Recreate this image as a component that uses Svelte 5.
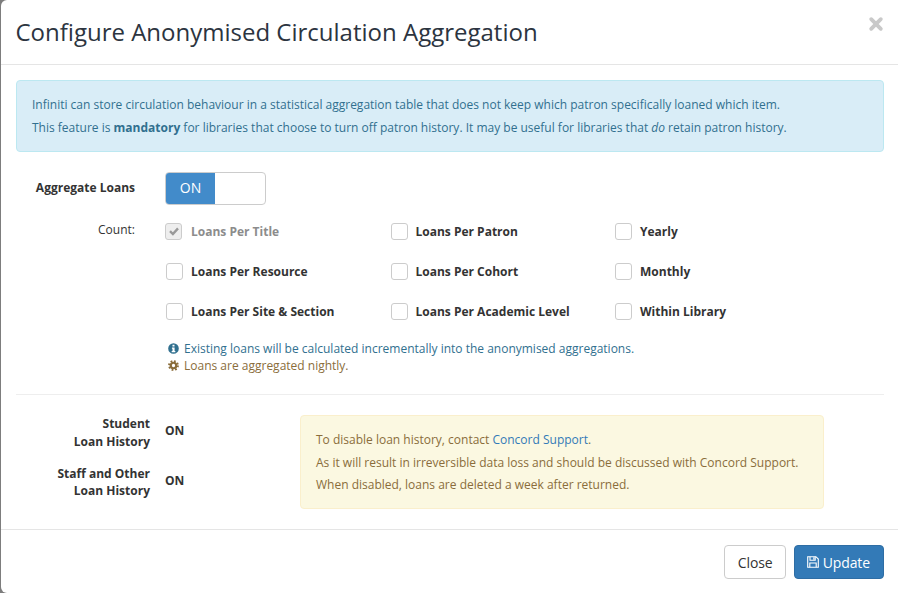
<script>
  const columns = [
    [
      { label: 'Loans Per Title', checked: true, disabled: true },
      { label: 'Loans Per Resource' },
      { label: 'Loans Per Site & Section' }
    ],
    [
      { label: 'Loans Per Patron' },
      { label: 'Loans Per Cohort' },
      { label: 'Loans Per Academic Level' }
    ],
    [{ label: 'Yearly' }, { label: 'Monthly' }, { label: 'Within Library' }]
  ];
</script>

<div class="modal">
  <header class="modal-header">
    <h4>Configure Anonymised Circulation Aggregation</h4>
    <button class="close" aria-label="Close">
      <svg viewBox="0 0 16 16" width="16" height="16">
        <path d="M3.2 3.2 12.8 12.8M12.8 3.2 3.2 12.8" />
      </svg>
    </button>
  </header>

  <div class="modal-body">
    <div class="alert info">
      <p>Infiniti can store circulation behaviour in a statistical aggregation table that does not keep which patron specifically loaned which item.</p>
      <p>This feature is <b>mandatory</b> for libraries that choose to turn off patron history. It may be useful for libraries that <i>do</i> retain patron history.</p>
    </div>

    <div class="toggle-row">
      <span class="row-label strong">Aggregate Loans</span>
      <div class="toggle">
        <span class="toggle-on">ON</span>
      </div>
    </div>

    <div class="count-row">
      <span class="row-label">Count:</span>
      <div class="count-grid">
        {#each columns as col}
          <div class="count-col">
            {#each col as item}
              <div class="check" class:disabled={item.disabled}>
                <span class="box">
                  {#if item.checked}
                    <svg viewBox="0 0 12 12" width="12" height="12">
                      <path d="M2 6.2 4.9 9 10 3.4" />
                    </svg>
                  {/if}
                </span>
                <span>{item.label}</span>
              </div>
            {/each}
          </div>
        {/each}
      </div>
    </div>

    <div class="notes">
      <div class="note blue">
        <svg viewBox="0 0 12 12" width="11" height="11">
          <path fill-rule="evenodd" d="M6 .2a5.800 5.800 0 1 0 0 11.600A5.800 5.800 0 0 0 6 .2ZM4.900 1.900h2.200v1.800H4.900ZM4.300 4.800h2.900v3.900h.8V10.200H4V8.700h.9V6.300h-.6Z" />
        </svg>
        Existing loans will be calculated incrementally into the anonymised aggregations.
      </div>
      <div class="note brown">
        <svg class="cog" viewBox="0 0 12 12" width="11" height="11">
          <circle cx="6" cy="6" r="3" />
          <circle class="teeth" cx="6" cy="6" r="4.900" />
        </svg>
        Loans are aggregated nightly.
      </div>
    </div>

    <hr />

    <div class="history">
      <div class="history-list">
        <div class="history-item">
          <span class="history-label">Student<br />Loan History</span>
          <span class="history-value">ON</span>
        </div>
        <div class="history-item">
          <span class="history-label">Staff and Other<br />Loan History</span>
          <span class="history-value">ON</span>
        </div>
      </div>
      <div class="alert warning">
        <p>To disable loan history, contact <a href="#support">Concord Support</a>.</p>
        <p>As it will result in irreversible data loss and should be discussed with Concord Support.</p>
        <p>When disabled, loans are deleted a week after returned.</p>
      </div>
    </div>
  </div>

  <footer class="modal-footer">
    <button class="btn">Close</button>
    <button class="btn primary">
      <svg viewBox="0 0 12 12" width="12" height="12">
        <path d="M.7.7h8.200l2.400 2.400v8.200H.7Z" />
        <path d="M3 .7v3.600h5.200V.7M2.800 11.300V7h6.400v4.300" />
        <path class="slot" d="M6.300 1.300h1.200v2.400H6.300Z" />
      </svg>
      Update
    </button>
  </footer>
</div>

<style>
  :global(body) {
    margin: 0;
    background: #7d7d7d;
    font-family: "Open Sans", "Liberation Sans", sans-serif;
    font-size: 12px;
    color: #333;
  }

  .modal {
    margin-left: 1px;
    height: 593px;
    box-sizing: border-box;
    background: #fff;
    border-radius: 6px 0 0 6px;
    display: flex;
    flex-direction: column;
    overflow: hidden;
  }

  .modal-header {
    height: 65px;
    box-sizing: border-box;
    flex: none;
    border-bottom: 1px solid #e5e5e5;
    padding: 15px 14px 0 15px;
    display: flex;
    justify-content: space-between;
    align-items: flex-start;
  }

  h4 {
    margin: 0 0 0 -0.5px;
    font-size: 24px;
    line-height: 34px;
    font-weight: 400;
    color: #2c3440;
  }

  .close {
    border: 0;
    background: none;
    padding: 0;
    margin: 1px 0 0 0;
    height: 16px;
    display: block;
  }

  .close path {
    fill: none;
    stroke: #c9c9c9;
    stroke-width: 3.800;
    stroke-linecap: round;
  }

  .modal-body {
    flex: 1;
    padding: 15px 14px 0 15px;
  }

  .alert {
    border: 1px solid;
    border-radius: 4px;
    box-sizing: border-box;
  }

  .alert p {
    margin: 0;
    line-height: 22.500px;
  }

  .info {
    background: #d9edf7;
    border-color: #bce8f1;
    color: #31708f;
    height: 72px;
    padding: 13px 15px;
  }

  .toggle-row {
    display: flex;
    margin-top: 20px;
    align-items: center;
    height: 33px;
  }

  .row-label {
    width: 119px;
    text-align: right;
    flex: none;
  }

  .strong {
    font-weight: 700;
    padding-bottom: 2px;
  }

  .toggle {
    margin-left: 30px;
    width: 101px;
    height: 33px;
    box-sizing: border-box;
    border: 1px solid #ccc;
    border-radius: 4px;
    overflow: hidden;
  }

  .toggle-on {
    display: block;
    width: 49px;
    height: 100%;
    background: #428bca;
    color: #fff;
    font-size: 14px;
    line-height: 29px;
    text-align: center;
  }

  .count-row {
    display: flex;
    margin-top: 15px;
  }

  .count-row .row-label {
    line-height: 20px;
  }

  .count-grid {
    display: flex;
    margin-left: 31px;
  }

  .count-col {
    width: 224.500px;
    display: flex;
    flex-direction: column;
    gap: 20px;
    margin-top: 1px;
  }

  .check {
    display: flex;
    align-items: center;
    gap: 8px;
    height: 20px;
    font-weight: 700;
  }

  .box {
    width: 17px;
    height: 17px;
    box-sizing: border-box;
    border: 1px solid #ccc;
    border-radius: 3px;
    background: #fff;
    display: flex;
    align-items: center;
    justify-content: center;
    flex: none;
  }

  .box path {
    fill: none;
    stroke: #999;
    stroke-width: 2.400;
  }

  .disabled {
    color: #8c8c8c;
  }

  .disabled .box {
    background: #eee;
    margin-left: -1px;
    margin-right: 1px;
  }

  .notes {
    margin: 19px 0 0 152px;
    line-height: 17px;
  }

  .note {
    display: flex;
    align-items: center;
    gap: 5px;
  }

  .note svg {
    flex: none;
  }

  .blue {
    color: #31708f;
  }

  .brown {
    color: #8a6d3b;
  }

  .note path {
    fill: currentColor;
  }

  .cog circle {
    fill: none;
    stroke: currentColor;
    stroke-width: 2.400;
  }

  .cog .teeth {
    stroke-width: 2;
    stroke-dasharray: 1.924 1.924;
  }

  hr {
    border: 0;
    border-top: 1px solid #eee;
    margin: 20px 0 20px;
  }

  .history {
    display: flex;
  }

  .history-list {
    width: 284px;
    flex: none;
    font-weight: 700;
  }

  .history-item {
    display: flex;
    align-items: center;
    margin-bottom: 14.750px;
  }

  .history-label {
    width: 134px;
    text-align: right;
    line-height: 17.500px;
  }

  .history-value {
    margin: 0 0 4px 15px;
  }

  .warning {
    width: 524px;
    height: 94px;
    background: #fbf8e1;
    border-color: #faefcc;
    color: #8a6d3b;
    padding: 13px 15px;
  }

  .warning a {
    color: #337ab7;
    text-decoration: none;
  }

  .modal-footer {
    height: 64px;
    flex: none;
    box-sizing: border-box;
    border-top: 1px solid #e5e5e5;
    padding: 15px 14px 0 0;
    display: flex;
    justify-content: flex-end;
    align-items: flex-start;
    gap: 8px;
  }

  .btn {
    font-family: inherit;
    font-size: 14px;
    height: 34px;
    box-sizing: border-box;
    border: 1px solid #ccc;
    border-radius: 4px;
    background: #fff;
    color: #333;
    padding: 0 12px 0 13px;
    display: flex;
    align-items: center;
    gap: 4px;
    letter-spacing: -0.1px;
  }

  .primary {
    background: #337ab7;
    border-color: #2e6da4;
    color: #fff;
    padding: 0 13px 0 12px;
  }

  .primary path {
    fill: none;
    stroke: #fff;
    stroke-width: 1.100;
  }

  .primary .slot {
    fill: #fff;
    stroke: none;
  }
</style>
